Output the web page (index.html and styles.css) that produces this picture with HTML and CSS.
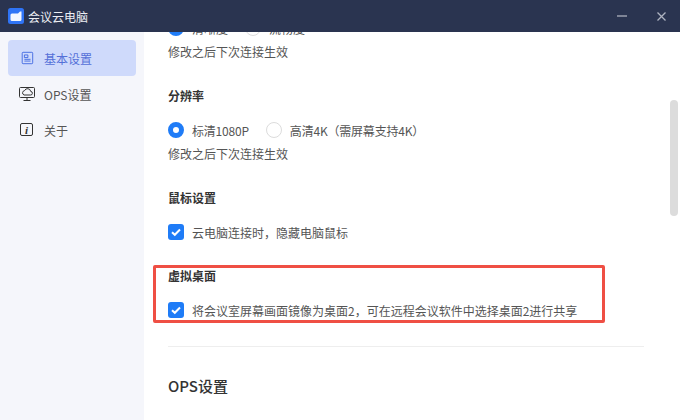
FILE: index.html
```html
<!DOCTYPE html>
<html>
<head>
  <meta charset="utf-8">
  <title>会议云电脑</title>
  <link rel="stylesheet" href="styles.css">
</head>
<body>
  <div class="titlebar">
    <div class="brand">
      <svg class="logo" width="16" height="16" viewBox="0 0 16 16">
        <rect width="16" height="16" rx="2.500" fill="#2f74f6"/>
        <path d="M3.500 5.500h6.500l2-2h1.500v8a1.500 1.500 0 0 1-1.500 1.500h-8a1.500 1.500 0 0 1-1.500-1.500v-4.500a1.500 1.500 0 0 1 1.500-1.500z" fill="#f2f6ff"/>
      </svg>
      <span>会议云电脑</span>
    </div>
    <div class="win-btns">
      <span class="min"></span>
      <svg width="9" height="9" viewBox="0 0 9 9"><path d="M.5 .5l8 8M8.500 .5l-8 8" stroke="#aeb3c0" stroke-width="1.300"/></svg>
    </div>
  </div>

  <div class="body">
    <nav class="sidebar">
      <div class="nav-item active">
        <svg width="14" height="14" viewBox="0 0 16 16" fill="none" stroke="#3a63e0" stroke-width="1">
          <rect x="2.500" y="1.500" width="12" height="13" rx="1"/>
          <path d="M5 4.500h4v3h-4zM5 9.500h7M5 11.500h7"/>
        </svg>
        <span>基本设置</span>
      </div>
      <div class="nav-item">
        <svg width="16" height="16" viewBox="0 0 16 16" fill="none" stroke="#333" stroke-width="1">
          <rect x="0.500" y="1.500" width="15" height="10" rx="1"/>
          <path d="M5 9h6.500a1.800 1.800 0 0 0 .2-3.600A3.200 3.200 0 0 0 5.600 4.600 2.300 2.300 0 0 0 5 9zM8 11.500v3M4.500 14.500h7"/>
        </svg>
        <span>OPS设置</span>
      </div>
      <div class="nav-item">
        <svg width="16" height="16" viewBox="0 0 16 16" fill="none">
          <rect x="1.500" y="1.500" width="12" height="12" rx="1.500" stroke="#333"/>
          <text x="7.500" y="11.500" text-anchor="middle" class="info-i">i</text>
        </svg>
        <span>关于</span>
      </div>
    </nav>

    <main class="content">
      <div class="scroll">
        <section class="group">
          <div class="options">
            <label class="opt"><i class="radio on"></i>清晰度</label>
            <label class="opt"><i class="radio"></i>流畅度</label>
          </div>
          <p class="hint">修改之后下次连接生效</p>
        </section>

        <section class="group">
          <h4>分辨率</h4>
          <div class="options">
            <label class="opt tight"><i class="radio on"></i>标清1080P</label>
            <label class="opt tight"><i class="radio"></i>高清4K（需屏幕支持4K）</label>
          </div>
          <p class="hint">修改之后下次连接生效</p>
        </section>

        <section class="group">
          <h4>鼠标设置</h4>
          <div class="options">
            <label class="opt">
              <i class="check"><svg width="16" height="16" viewBox="0 0 16 16"><path d="M4 8.200l2.800 2.600L12 5.500" fill="none" stroke="#fff" stroke-width="2"/></svg></i>
              云电脑连接时，隐藏电脑鼠标
            </label>
          </div>
        </section>

        <section class="group marked">
          <h4>虚拟桌面</h4>
          <div class="options">
            <label class="opt">
              <i class="check"><svg width="16" height="16" viewBox="0 0 16 16"><path d="M4 8.200l2.800 2.600L12 5.500" fill="none" stroke="#fff" stroke-width="2"/></svg></i>
              将会议室屏幕画面镜像为桌面2，可在远程会议软件中选择桌面2进行共享
            </label>
          </div>
          <div class="red-box"></div>
        </section>

        <hr class="divider">
        <h2 class="section-title">OPS设置</h2>
      </div>
      <div class="scrollbar"></div>
    </main>
  </div>
</body>
</html>
```

FILE: styles.css
```css
* {
  box-sizing: border-box;
}
html, body {
  margin: 0;
  height: 100%;
  overflow: hidden;
}
body {
  display: flex;
  flex-direction: column;
  font-family: "Noto Sans CJK SC", "Noto Sans", sans-serif;
  font-size: 12px;
  color: #555;
  background: #fff;
}

.titlebar {
  display: flex;
  align-items: center;
  justify-content: space-between;
  flex: none;
  height: 32px;
  padding: 0 14px 0 8px;
  background: #2a3450;
}
.brand {
  display: flex;
  align-items: center;
  gap: 4px;
  color: #eceef3;
  font-size: 12px;
}
.win-btns {
  display: flex;
  align-items: center;
  gap: 30px;
}
.win-btns .min {
  display: block;
  width: 10px;
  height: 2px;
  background: #7e8496;
}

.body {
  display: flex;
  flex: 1;
  min-height: 0;
}

.sidebar {
  flex: none;
  width: 144px;
  padding: 8px;
  background: #f5f6fb;
}
.nav-item {
  display: flex;
  align-items: center;
  height: 36px;
  padding-left: 11px;
  border-radius: 4px;
  color: #555;
}
.nav-item svg {
  flex: none;
  width: 16px;
  margin-right: 9px;
}
.nav-item.active {
  background: #cfdafb;
  color: #5470d8;
}
.info-i {
  font-family: "Liberation Serif", serif;
  font-size: 11px;
  font-weight: bold;
  font-style: italic;
  fill: #333;
}

.content {
  position: relative;
  flex: 1;
  overflow: hidden;
}
/* content is scrolled a little, the top row is cut by the title bar */
.scroll {
  width: 476px;
  margin: -13px 0 0 24px;
}
.group {
  position: relative;
  margin-bottom: 26px;
}
.group.marked {
  margin-bottom: 27px;
}
.group h4 {
  margin: 0 0 16px;
  font-size: 12px;
  line-height: 18px;
  font-weight: 700;
  color: #333;
}
.options {
  display: flex;
  align-items: center;
  gap: 17px;
  height: 18px;
}
.opt {
  display: flex;
  align-items: center;
  gap: 8px;
}
.opt.tight {
  letter-spacing: -.2px;
}
.radio {
  display: block;
  flex: none;
  width: 16px;
  height: 16px;
  border: 1px solid #dcdcdc;
  border-radius: 50%;
  background: #fff;
}
.radio.on {
  border: 5px solid #1f7cf7;
}
.check {
  display: block;
  flex: none;
  width: 16px;
  height: 16px;
  border-radius: 3px;
  background: #1f7cf7;
}
.check svg {
  display: block;
}
.hint {
  margin: 6px 0 0;
  line-height: 18px;
}
.red-box {
  position: absolute;
  left: -15px;
  right: 39px;
  top: -2px;
  bottom: -4px;
  border: 3px solid #ef4f44;
  border-radius: 2px;
}
.divider {
  margin: 0;
  border: 0;
  border-top: 1px solid #eeeeee;
}
.section-title {
  margin: 28px 0 0;
  font-size: 15px;
  line-height: 22px;
  font-weight: 500;
  color: #333;
}

.scrollbar {
  position: absolute;
  top: 68px;
  right: 2px;
  width: 8px;
  height: 116px;
  border-radius: 4px;
  background: #dcdcdc;
}
```
